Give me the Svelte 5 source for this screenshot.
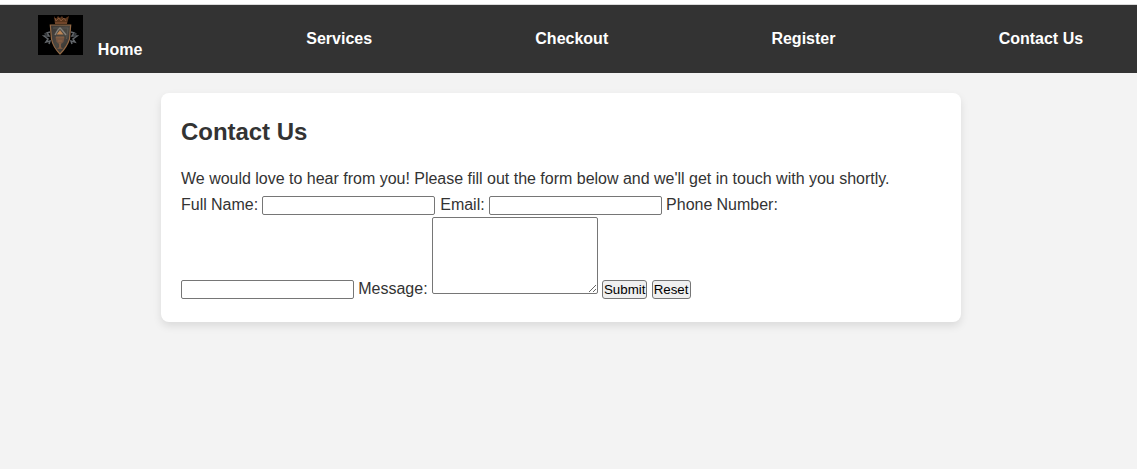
<script>
  const links = ['Services', 'Checkout', 'Register', 'Contact Us'];
</script>

<header>
  <nav>
    <a class="home" href="#home">
      <svg class="logo" width="45" height="40" viewBox="0 0 45 40" aria-hidden="true">
        <defs>
          <linearGradient id="steel" x1="0" y1="0" x2="1" y2="1">
            <stop offset="0" stop-color="#3a3735" />
            <stop offset=".5" stop-color="#4b4741" />
            <stop offset="1" stop-color="#302e2c" />
          </linearGradient>
          <filter id="soft"><feGaussianBlur stdDeviation=".65" /></filter>
          <filter id="relief"><feGaussianBlur stdDeviation=".3" /></filter>
        </defs>
        <rect width="45" height="40" fill="#000" />
        <g filter="url(#soft)" fill="none" stroke="#62666a" stroke-width="1.5">
          <path d="M12 17L9 18L11 21L6 21L10 24L8 27L12 26L11 29M33 17L36 18L34 21L39 21L35 24L37 27L33 26L34 29" />
          <path d="M7 18L9 22M38 18L36 22" stroke="#393c40" stroke-width="2" />
        </g>
        <g filter="url(#relief)">
          <path d="M16 1L18 4L20 1L22 3L24 1L26 4L31 1L29 9H17Z" fill="#59351f" />
          <path d="M17 3L18 6L21 3L23 6L26 3L28 6M17 8H29" fill="none" stroke="#8a5a3c" stroke-width=".9" />
          <path d="M12.3 10H32.7L31.5 24Q29 32 22 39Q15 32 13.5 24Z" fill="url(#steel)" stroke="#946945" stroke-width="1.2" />
          <path d="M15 13H30L28.5 24" fill="none" stroke="#615e59" stroke-width=".7" />
          <path d="M17 20L20 15L22 13L24 15L28 20" fill="none" stroke="#85817a" stroke-width="1.4" />
          <path d="M18.5 19.5L22 15L25.5 19.5Z" fill="#bd8654" />
          <path d="M17.5 22H26.5L25.5 27L23 29V32L25 34H19L21 32V29L18.5 27Z" fill="#755440" />
          <path d="M18 22H26M20 26H24M22 28V33" fill="none" stroke="#94694a" stroke-width=".8" />
        </g>
      </svg>
      Home</a>
    {#each links as link}
      <a href="#{link}">{link}</a>
    {/each}
  </nav>
</header>

<main>
  <h2>Contact Us</h2>
  <p>We would love to hear from you! Please fill out the form below and we'll get in touch with you shortly.</p>
  <form>
    <label for="name">Full Name:</label>
    <input id="name" type="text" />
    <label for="email">Email:</label>
    <input id="email" type="email" />
    <label for="phone">Phone Number:</label>
    <input id="phone" type="tel" />
    <label for="message">Message:</label>
    <textarea id="message" rows="5"></textarea>
    <button type="submit">Submit</button>
    <button type="reset">Reset</button>
  </form>
</main>

<style>
  :global(body) {
    min-height: 100vh;
    margin: 0;
    background: #f3f3f3;
    color: #333;
    font: 16px/1.6 "Liberation Sans", Arial, sans-serif;
  }
  header {
    box-sizing: border-box;
    height: 73px;
    padding: 10px 53.9px 10px 38px;
    border-top: 4px solid #fff;
    background: #333;
    box-shadow: inset 0 1px #dadada;
  }
  nav {
    display: flex;
    justify-content: space-between;
    align-items: center;
    height: 50px;
  }
  a {
    color: #fff;
    font-weight: bold;
    text-decoration: none;
  }
  .home {
    margin-right: 0.8px;
  }
  .logo {
    margin-right: 10.4px;
    vertical-align: baseline;
  }
  main {
    box-sizing: border-box;
    width: 800px;
    height: 229px;
    margin: 20px 0 0 161px;
    padding: 20px;
    border-radius: 8px;
    background: #fff;
    box-shadow: 0 4px 8px rgba(0, 0, 0, 0.1);
  }
  h2 {
    margin: 0 0 14.8px;
    font-size: 24px;
    letter-spacing: -0.04px;
  }
  p {
    margin: 0;
    letter-spacing: -0.01px;
  }
  form {
    word-spacing: -0.25px;
  }
  input,
  textarea,
  button {
    box-sizing: border-box;
    margin: 0;
    padding: 0;
    border: 1px solid #767676;
    border-radius: 2px;
    font: 13.333px "Liberation Sans", Arial, sans-serif;
  }
  input {
    width: 173px;
    height: 19px;
    background: #fff;
  }
  #name {
    margin-right: 0.7px;
  }
  textarea {
    width: 166px;
    height: 77px;
    background: #fff;
  }
  button {
    height: 19px;
    padding: 0 1px;
    border-radius: 3px;
    background: #efefef;
    color: #000;
  }
</style>
